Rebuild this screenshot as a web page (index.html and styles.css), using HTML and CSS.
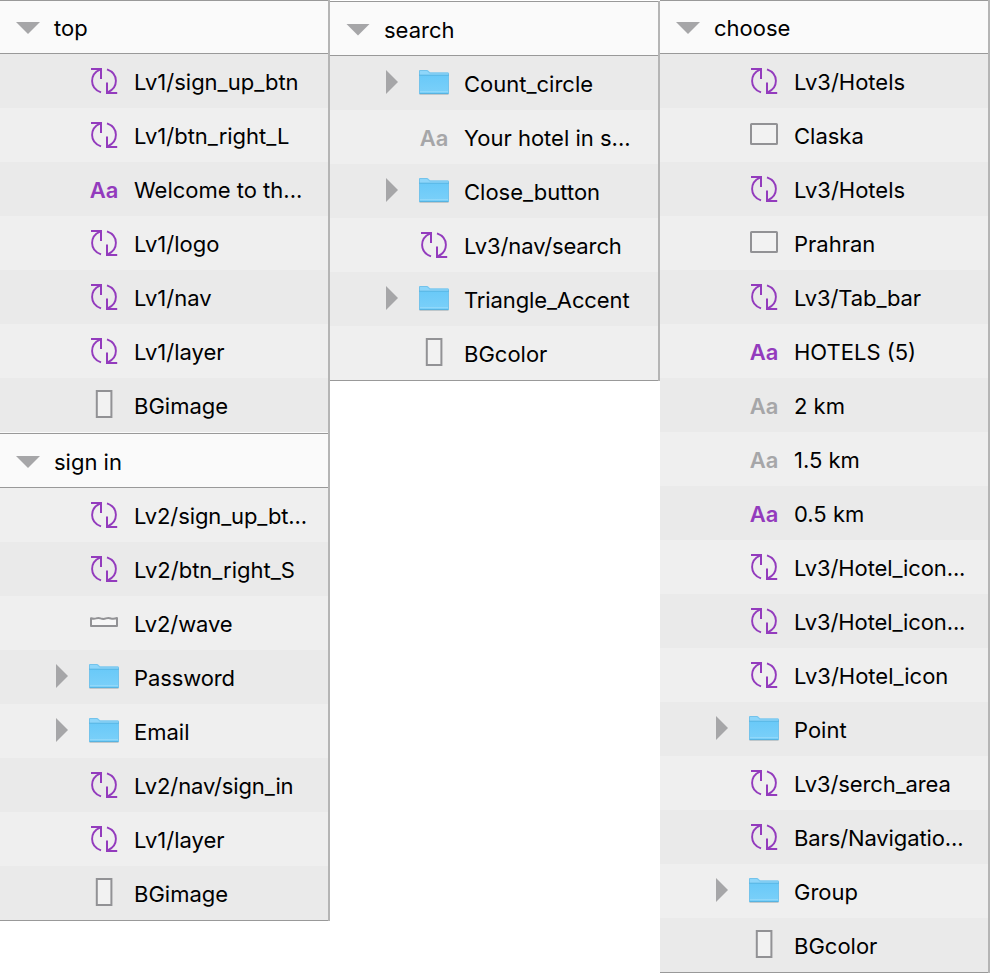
FILE: index.html
```
<!DOCTYPE html>
<html lang="en">
<head>
<meta charset="utf-8">
<title>Layers</title>
<link rel="stylesheet" href="styles.css">
</head>
<body>
<svg class="defs" width="0" height="0" aria-hidden="true">
  <defs>
    <linearGradient id="folder-fill" x1="0" y1="0" x2="0" y2="1">
      <stop offset="0" stop-color="#69c9f8"/>
      <stop offset="1" stop-color="#7bd0f9"/>
    </linearGradient>
  </defs>
  <symbol id="symbol" viewBox="0 0 32 32">
    <g fill="none" stroke="#933bbd">
      <path stroke-width="2" d="M3 4H13V14M29.2 28H19V17.600"/>
      <path stroke-width="1.9" d="M12 4.600C7 6.800 4.100 11 4.100 16C4.100 21.200 7.500 25.400 13 27.400M19 4.400C24.500 6.400 27.900 10.700 27.900 15.800C27.900 20.800 25 25 20 27.200"/>
    </g>
  </symbol>
  <symbol id="folder" viewBox="0 0 32 32">
    <path d="M1.5 27.4H30.5" stroke="#b9c3c8" stroke-width="1"/>
    <path d="M1 4Q1 3 2 3H9Q10 3 10.6 3.8L12.4 5.6H30Q31 5.6 31 6.6V26Q31 27 30 27H2Q1 27 1 26Z" fill="#8ed6fa"/>
    <path d="M1 8H31V26Q31 27 30 27H2Q1 27 1 26Z" fill="url(#folder-fill)"/>
    <path d="M1.5 26V4Q1.5 3.5 2 3.5H9L11.8 6H30Q30.5 6 30.5 6.5V26" fill="none" stroke="#74c3eb" stroke-width="1"/>
    <path d="M1 8.2H31" stroke="#58b5e3" stroke-width="1"/>
    <path d="M2 24.5H30" stroke="#90d8fa" stroke-width="1"/>
    <path d="M1.5 26.5H30.5" stroke="#58b3e0" stroke-width="1"/>
  </symbol>
  <symbol id="wide" viewBox="0 0 32 32">
    <rect x="3" y="5" width="26" height="20" rx=".6" fill="#f2f2f2" stroke="#929295" stroke-width="2"/>
  </symbol>
  <symbol id="tall" viewBox="0 0 32 32">
    <rect x="8.8" y="2" width="14.6" height="26" fill="#f2f2f2" stroke="#929295" stroke-width="2"/>
  </symbol>
  <symbol id="wave" viewBox="0 0 32 32">
    <path d="M3 19V11.200Q5.500 12 8 11.400Q10.500 10.400 12.500 11.400Q15.500 12.400 18 11.400Q20.500 10.500 23 11.500Q26 12.200 29 11V19Z" fill="#f7f7f7" stroke="#929295" stroke-width="2" stroke-linejoin="round"/>
  </symbol>
</svg>

<main class="board">
  <div class="column">
    <section class="panel">
      <h2 class="head"><i class="open"></i>top</h2>
      <ul class="rows">
        <li><i></i><svg><use href="#symbol"/></svg><span>Lv1/sign_up_btn</span></li>
        <li><i></i><svg><use href="#symbol"/></svg><span>Lv1/btn_right_L</span></li>
        <li><i></i><b>Aa</b><span>Welcome to th...</span></li>
        <li><i></i><svg><use href="#symbol"/></svg><span>Lv1/logo</span></li>
        <li><i></i><svg><use href="#symbol"/></svg><span>Lv1/nav</span></li>
        <li><i></i><svg><use href="#symbol"/></svg><span>Lv1/layer</span></li>
        <li><i></i><svg><use href="#tall"/></svg><span>BGimage</span></li>
      </ul>
    </section>
    <section class="panel flip last">
      <h2 class="head"><i class="open"></i>sign in</h2>
      <ul class="rows">
        <li><i></i><svg><use href="#symbol"/></svg><span class="snug">Lv2/sign_up_bt...</span></li>
        <li><i></i><svg><use href="#symbol"/></svg><span>Lv2/btn_right_S</span></li>
        <li><i></i><svg><use href="#wave"/></svg><span class="snug">Lv2/wave</span></li>
        <li><i class="closed"></i><svg><use href="#folder"/></svg><span class="snug">Password</span></li>
        <li><i class="closed"></i><svg><use href="#folder"/></svg><span>Email</span></li>
        <li><i></i><svg><use href="#symbol"/></svg><span class="snug">Lv2/nav/sign_in</span></li>
        <li><i></i><svg><use href="#symbol"/></svg><span>Lv1/layer</span></li>
        <li><i></i><svg><use href="#tall"/></svg><span>BGimage</span></li>
      </ul>
    </section>
  </div>

  <div class="column lowered">
    <section class="panel last">
      <h2 class="head"><i class="open"></i>search</h2>
      <ul class="rows">
        <li><i class="closed"></i><svg><use href="#folder"/></svg><span>Count_circle</span></li>
        <li><i></i><b class="muted">Aa</b><span>Your hotel in s...</span></li>
        <li><i class="closed"></i><svg><use href="#folder"/></svg><span>Close_button</span></li>
        <li><i></i><svg><use href="#symbol"/></svg><span class="snug">Lv3/nav/search</span></li>
        <li><i class="closed"></i><svg><use href="#folder"/></svg><span class="snug">Triangle_Accent</span></li>
        <li><i></i><svg><use href="#tall"/></svg><span>BGcolor</span></li>
      </ul>
    </section>
  </div>

  <div class="column">
    <section class="panel last">
      <h2 class="head"><i class="open"></i>choose</h2>
      <ul class="rows">
        <li><i></i><svg><use href="#symbol"/></svg><span>Lv3/Hotels</span></li>
        <li><i></i><svg><use href="#wide"/></svg><span>Claska</span></li>
        <li><i></i><svg><use href="#symbol"/></svg><span>Lv3/Hotels</span></li>
        <li><i></i><svg><use href="#wide"/></svg><span>Prahran</span></li>
        <li><i></i><svg><use href="#symbol"/></svg><span class="snug">Lv3/Tab_bar</span></li>
        <li><i></i><b>Aa</b><span>HOTELS (5)</span></li>
        <li><i></i><b class="muted">Aa</b><span>2 km</span></li>
        <li><i></i><b class="muted">Aa</b><span>1.5 km</span></li>
        <li><i></i><b>Aa</b><span>0.5 km</span></li>
        <li><i></i><svg><use href="#symbol"/></svg><span class="snug">Lv3/Hotel_icon...</span></li>
        <li><i></i><svg><use href="#symbol"/></svg><span class="snug">Lv3/Hotel_icon...</span></li>
        <li><i></i><svg><use href="#symbol"/></svg><span>Lv3/Hotel_icon</span></li>
        <li><i class="closed"></i><svg><use href="#folder"/></svg><span>Point</span></li>
        <li><i></i><svg><use href="#symbol"/></svg><span class="snug">Lv3/serch_area</span></li>
        <li><i></i><svg><use href="#symbol"/></svg><span class="snug">Bars/Navigatio...</span></li>
        <li><i class="closed"></i><svg><use href="#folder"/></svg><span>Group</span></li>
        <li><i></i><svg><use href="#tall"/></svg><span>BGcolor</span></li>
      </ul>
    </section>
  </div>
</main>
</body>
</html>
```
FILE: styles.css
```
* {
  box-sizing: border-box;
}

body {
  margin: 0;
  background: #fff;
  color: #000;
  font: 400 22px/54px Inter, "Liberation Sans", sans-serif;
}

.defs {
  display: block;
}

.board {
  display: grid;
  grid-template-columns: repeat(3, 330px);
  align-items: start;
  height: 974px;
}

.column {
  border-right: 2px solid #b5b5b5;
}

.lowered {
  margin-top: 1px;
}

.head {
  display: flex;
  align-items: center;
  height: 54px;
  margin: 0;
  padding: 2px 0 0 16px;
  border: solid #999;
  border-width: 1px 0;
  background: #fafafa;
  font: inherit;
  line-height: 50px;
}

.lowered .head,
.flip .head {
  height: 55px;
}

.flip .head {
  padding-top: 3px;
}

.open {
  width: 24px;
  height: 12px;
  margin: 0 14px 0 0;
  background: #a6a6a8;
  clip-path: polygon(0 0, 100% 0, 50% 100%);
}

.rows {
  margin: 0;
  padding: 0;
  list-style: none;
}

.rows li {
  display: grid;
  grid-template-columns: 12px 32px 1fr;
  column-gap: 20px;
  align-items: center;
  height: 54px;
  padding-left: 56px;
  background: #eaeaea;
  white-space: nowrap;
}

.rows li:nth-child(even),
.flip .rows li:nth-child(odd) {
  background: #efefef;
}

.flip .rows li:nth-child(even) {
  background: #eaeaea;
}

.panel:not(.last) .rows {
  border-bottom: 1px solid #fafafa;
}

.last {
  border-bottom: 1px solid #999;
}

.closed {
  width: 12px;
  height: 24px;
  margin-top: -2px;
  background: #a6a6a8;
  clip-path: polygon(0 0, 100% 50%, 0 100%);
}

.rows svg {
  display: block;
  width: 32px;
  height: 32px;
}

.rows b {
  padding-top: 2px;
  color: #933bbd;
  font-weight: 600;
  line-height: 52px;
  text-align: center;
}

.rows .muted {
  color: #a6a6a8;
}

.rows span {
  margin-left: -6px;
  padding-top: 2px;
  line-height: 52px;
}

.rows .snug {
  letter-spacing: -0.12px;
}
```
